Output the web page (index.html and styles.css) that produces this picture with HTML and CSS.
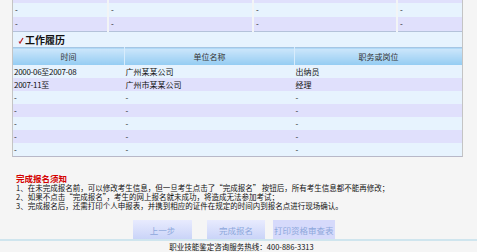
FILE: index.html
```html
<!DOCTYPE html>
<html lang="zh-CN">
<head>
    <meta charset="utf-8">
    <title>工作履历</title>
    <link rel="stylesheet" href="styles.css">
</head>
<body>
    <div class="main">
        <table class="grid prev">
            <tr class="even"><td>-</td><td>-</td><td>-</td><td>-</td></tr>
            <tr class="odd"><td>-</td><td>-</td><td>-</td><td>-</td></tr>
            <tr class="even"><td>-</td><td>-</td><td>-</td><td>-</td></tr>
        </table>

        <div class="section">
            <svg class="mark" width="6" height="7" viewBox="0 0 6 7">
                <path d="M1 4.5 L2 6 L5 1" fill="none" stroke="#c0282d" stroke-width="1.3"/>
            </svg>
            工作履历
        </div>

        <table class="grid work">
            <thead>
                <tr><th>时间</th><th>单位名称</th><th>职务或岗位</th></tr>
            </thead>
            <tbody>
                <tr class="odd"><td class="date">2000-06至2007-08</td><td>广州某某公司</td><td>出纳员</td></tr>
                <tr class="even"><td class="date">2007-11至</td><td>广州市某某公司</td><td>经理</td></tr>
                <tr class="odd"><td>-</td><td>-</td><td>-</td></tr>
                <tr class="even"><td>-</td><td>-</td><td>-</td></tr>
                <tr class="odd"><td>-</td><td>-</td><td>-</td></tr>
                <tr class="even"><td>-</td><td>-</td><td>-</td></tr>
                <tr class="odd"><td>-</td><td>-</td><td>-</td></tr>
            </tbody>
        </table>
    </div>

    <div class="notice">
        <p class="notice-title">完成报名须知</p>
        <p>1、在未完成报名前，可以修改考生信息，但一旦考生点击了“完成报名” 按钮后，所有考生信息都不能再修改；</p>
        <p>2、如果不点击“完成报名”，考生的网上报名就未成功，将造成无法参加考试；</p>
        <p>3、完成报名后，还需打印个人申报表，并携到相应的证件在规定的时间内到报名点进行现场确认。</p>
    </div>

    <div class="actions">
        <button class="btn btn-prev" disabled>上一步</button>
        <button class="btn btn-done" disabled>完成报名</button>
        <button class="btn btn-print" disabled>打印资格审查表</button>
    </div>

    <div class="footer">职业技能鉴定咨询服务热线：400-886-3313</div>
</body>
</html>
```

FILE: styles.css
```css
body {
    margin: 0;
    background-color: #f5f5f5;
    font-family: "Noto Sans CJK SC", "Liberation Sans", sans-serif;
    color: #111;
    overflow: hidden;
}
.main {
    margin-left: 12px;
    width: 449px;
    border-left: 1px solid #c4c4c4;
    border-right: 1px solid #c4c4c4;
    border-bottom: 1px solid #b8b8c8;
}
.grid {
    width: 100%;
    border-collapse: collapse;
    table-layout: fixed;
    font-size: 8px;
}
.grid td {
    padding: 0 0 0 2px;
    line-height: 13px;
    height: 13px;
    white-space: nowrap;
    overflow: hidden;
    vertical-align: middle;
}
.odd {
    background-color: #e7f3fe;
}
.even {
    background-color: #e0e0fc;
}
.prev {
    margin-top: -11px;
    border-bottom: 1px solid #b4c2da;
}
.prev td {
    height: 14px;
    line-height: 14px;
    border-right: 2px solid #f2f4f6;
}
.prev td:nth-child(1) { width: 92px; }
.prev td:nth-child(2) { width: 141px; }
.prev td:nth-child(3) { width: 140px; }
.prev td:last-child { border-right: none; }
.section {
    height: 15px;
    line-height: 15px;
    background-color: #e7f3fe;
    font-size: 10px;
    font-weight: bold;
    padding-left: 5px;
    display: flex;
    align-items: center;
    gap: 1px;
}
.mark {
    margin-top: 2px;
}
.work th {
    height: 17px;
    padding: 0;
    font-weight: normal;
    color: #333;
    background: linear-gradient(#cde6fb, #93ccf2);
    border-top: 1px solid #a6c6e4;
    border-right: 1px solid #d8ecfc;
    text-align: center;
}
.work th:nth-child(1) { width: 111px; }
.work th:nth-child(2) { width: 169px; }
.work th:last-child { border-right: none; }
.work td {
    padding-left: 1px;
}
.work td.date {
    letter-spacing: -0.3px;
}
.notice {
    margin: 16px 0 0 16px;
    font-size: 7.5px;
    line-height: 9px;
}
.notice p {
    margin: 0;
    white-space: nowrap;
}
.notice .notice-title {
    color: #d40000;
    font-weight: bold;
    font-size: 8.5px;
    line-height: 10px;
}
.actions {
    display: flex;
    margin-top: 10px;
    padding-left: 133px;
    height: 19px;
}
.btn {
    height: 19px;
    padding: 0;
    border: none;
    font-family: inherit;
    font-size: 8.5px;
    color: #8ea8dc;
    background: linear-gradient(#e8ebfe, #cad4f8);
    white-space: nowrap;
    overflow: hidden;
}
.btn-prev { width: 59px; margin-right: 15px; }
.btn-done { width: 58px; margin-right: 8px; }
.btn-print {
    width: 62px;
    text-align: left;
    padding-left: 1px;
    background: #d6dafb;
}
.footer {
    border-top: 2px solid #cfe5ee;
    text-align: center;
    padding-left: 6px;
    font-size: 7.5px;
    line-height: 12px;
    color: #111;
}
```
